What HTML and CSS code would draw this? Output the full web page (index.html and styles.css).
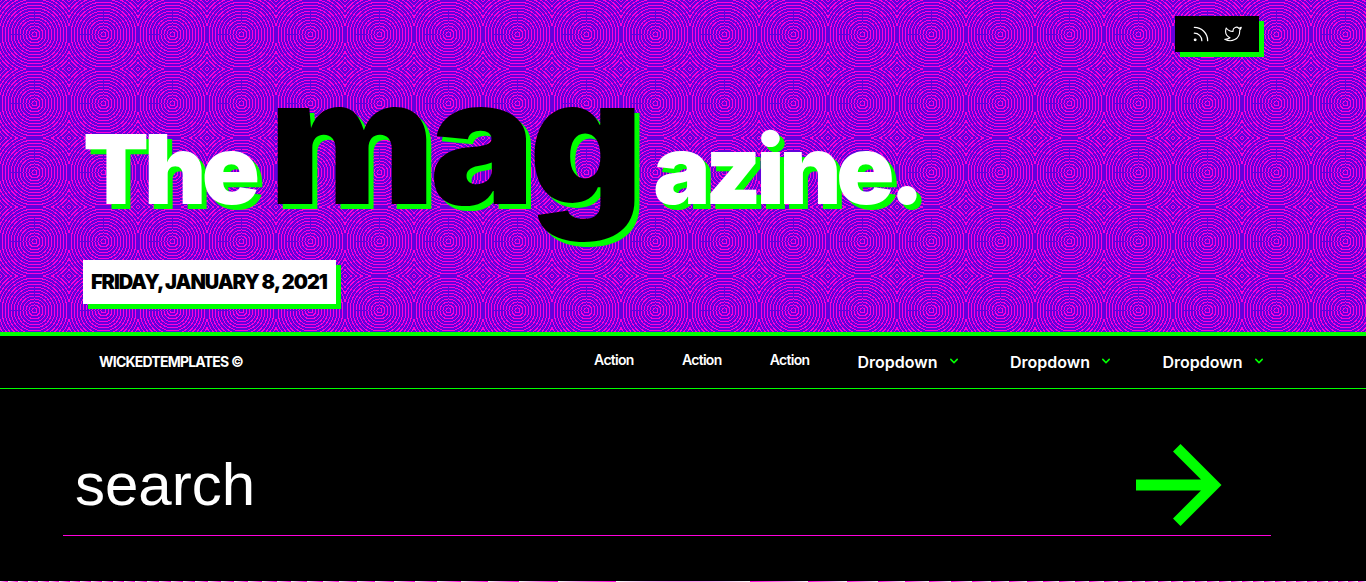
FILE: index.html
```
<!DOCTYPE html>
<html lang="en">
<head>
<meta charset="utf-8">
<title>The magazine.</title>
<link rel="stylesheet" href="styles.css">
</head>
<body>
<header class="masthead">
  <div class="social">
    <svg width="20" height="20" viewBox="0 0 24 24" class="icon"><path d="M4 11a9 9 0 0 1 9 9M4 4a16 16 0 0 1 16 16"/><circle cx="5" cy="19" r="1"/></svg>
    <svg width="18" height="18" viewBox="0 0 24 24" class="icon"><path d="M23 3a10.9 10.9 0 0 1-3.14 1.53 4.48 4.48 0 0 0-7.86 3v1A10.66 10.66 0 0 1 3 4s-4 9 5 13a11.64 11.64 0 0 1-7 2c9 5 20 0 20-11.5a4.5 4.5 0 0 0-.08-.83A7.72 7.72 0 0 0 23 3z"/></svg>
  </div>
  <h1 class="title"><span class="the">The</span><span class="mag">mag</span><span class="azine">azine.</span></h1>
  <div class="date">Friday, January 8, 2021</div>
</header>
<nav class="nav">
  <a class="brand">WickedTemplates ©</a>
  <div class="links">
    <a class="action">Action</a>
    <a class="action">Action</a>
    <a class="action">Action</a>
    <a class="dropdown"><span>Dropdown</span><svg class="chevron" width="16" height="16" viewBox="0 0 20 20"><path d="M5.293 7.293a1 1 0 0 1 1.414 0L10 10.586l3.293-3.293a1 1 0 1 1 1.414 1.414l-4 4a1 1 0 0 1-1.414 0l-4-4a1 1 0 0 1 0-1.414z"/></svg></a>
    <a class="dropdown"><span>Dropdown</span><svg class="chevron" width="16" height="16" viewBox="0 0 20 20"><path d="M5.293 7.293a1 1 0 0 1 1.414 0L10 10.586l3.293-3.293a1 1 0 1 1 1.414 1.414l-4 4a1 1 0 0 1-1.414 0l-4-4a1 1 0 0 1 0-1.414z"/></svg></a>
    <a class="dropdown"><span>Dropdown</span><svg class="chevron" width="16" height="16" viewBox="0 0 20 20"><path d="M5.293 7.293a1 1 0 0 1 1.414 0L10 10.586l3.293-3.293a1 1 0 1 1 1.414 1.414l-4 4a1 1 0 0 1-1.414 0l-4-4a1 1 0 0 1 0-1.414z"/></svg></a>
  </div>
</nav>
<main class="search-area">
  <div class="search">
    <span class="query">search</span>
    <svg class="arrow" width="86" height="84" viewBox="0 0 86 84"><path d="M0 36.5H65L37 8.5L44.5 1L85.5 42L44.5 83L37 75.5L65 47.5H0z"/></svg>
  </div>
</main>
<div class="strip"></div>
</body>
</html>
```
FILE: styles.css
```
* { box-sizing: border-box; }
body {
  margin: 0;
  height: 582px;
  overflow: hidden;
  background: #000;
  color: #fff;
  font-family: Inter, sans-serif;
  display: flex;
  flex-direction: column;
}
.masthead {
  height: 336px;
  flex: none;
  padding: 16px 107px 0 83px;
  border-bottom: 4px solid #0f0;
  background: repeating-radial-gradient(#6400dc, #6400dc 2px, #ff00dc 2px, #ff00dc 3px) 0 0 / 69px 69px;
  display: flex;
  flex-direction: column;
  align-items: flex-start;
}
.social {
  align-self: flex-end;
  display: flex;
  align-items: center;
  gap: 13px;
  width: 84px;
  height: 36px;
  padding: 0 13px 0 16px;
  background: #000;
  box-shadow: 5px 5px 0 #0f0;
}
.icon { fill: none; stroke: #fff; stroke-width: 1.5; stroke-linecap: round; stroke-linejoin: round; }
.title {
  margin: 0 0 32px;
  height: 176px;
  line-height: 176px;
  display: flex;
  align-items: baseline;
  font-size: 96px;
  font-weight: 900;
  letter-spacing: -0.05em;
  text-shadow: 5px 5px 0 #0f0;
  white-space: nowrap;
}
.mag { font-size: 176px; color: #000; margin-left: 14px; letter-spacing: -5.4px; }
.azine { margin-left: 15.3px; letter-spacing: -5.4px; }
.date {
  width: 253px;
  height: 44px;
  padding: 0 8px;
  line-height: 44px;
  background: #fff;
  color: #000;
  box-shadow: 5px 5px 0 #0f0;
  font-size: 20px;
  font-weight: 900;
  letter-spacing: -1.06px;
  text-transform: uppercase;
  white-space: nowrap;
}
.nav {
  height: 53px;
  flex: none;
  padding: 0 99px;
  border-bottom: 1px solid #0f0;
  display: flex;
  justify-content: space-between;
  align-items: center;
}
.brand { font-size: 14px; font-weight: 700; letter-spacing: -0.78px; text-transform: uppercase; padding-bottom: 2px; }
.links { display: flex; align-items: center; }
.action { font-size: 14px; font-weight: 600; letter-spacing: -0.7px; width: 87.8px; padding-bottom: 6px; }
.dropdown { display: flex; align-items: center; font-size: 16px; font-weight: 600; letter-spacing: 0; width: 152.5px; }
.dropdown:last-child { width: 104.5px; }
.chevron { fill: #0f0; margin-left: 8.5px; margin-bottom: 3px; }
.search-area { flex: 1; padding: 47px 95px 0 63px; }
.search {
  height: 100px;
  border-bottom: 1px solid #ff00dc;
  display: flex;
  justify-content: space-between;
  align-items: center;
  padding: 0 49px 2px 12px;
}
.query { font-family: "Liberation Sans", sans-serif; font-size: 60px; line-height: 90px; }
.arrow { fill: #0f0; }
.strip {
  height: 1px;
  flex: none;
  background: repeating-radial-gradient(circle at 50% -1002.5px, #ff00dc 4.24px, #fff 9.74px);
}
```
